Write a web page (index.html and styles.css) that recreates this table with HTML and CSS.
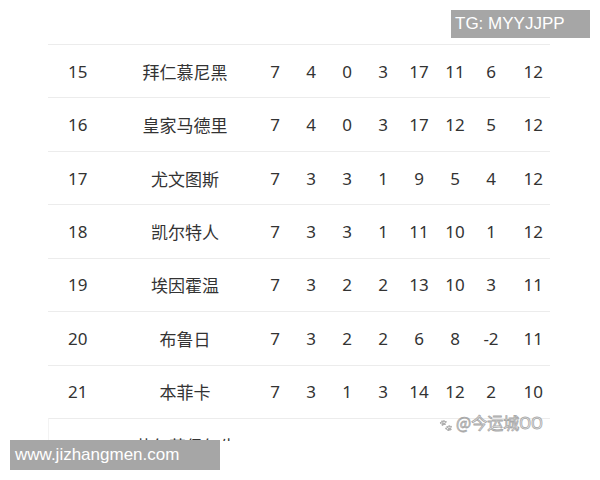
FILE: index.html
```html
<!DOCTYPE html>
<html lang="zh">
<head>
<meta charset="utf-8">
<link rel="stylesheet" href="styles.css">
</head>
<body>
<div class="page">
  <div class="table">
    <div class="row"><span class="rank">15</span><span class="name">拜仁慕尼黑</span><span>7</span><span>4</span><span>0</span><span>3</span><span>17</span><span>11</span><span>6</span><span class="pts">12</span></div>
    <div class="row"><span class="rank">16</span><span class="name">皇家马德里</span><span>7</span><span>4</span><span>0</span><span>3</span><span>17</span><span>12</span><span>5</span><span class="pts">12</span></div>
    <div class="row"><span class="rank">17</span><span class="name">尤文图斯</span><span>7</span><span>3</span><span>3</span><span>1</span><span>9</span><span>5</span><span>4</span><span class="pts">12</span></div>
    <div class="row"><span class="rank">18</span><span class="name">凯尔特人</span><span>7</span><span>3</span><span>3</span><span>1</span><span>11</span><span>10</span><span>1</span><span class="pts">12</span></div>
    <div class="row"><span class="rank">19</span><span class="name">埃因霍温</span><span>7</span><span>3</span><span>2</span><span>2</span><span>13</span><span>10</span><span>3</span><span class="pts">11</span></div>
    <div class="row"><span class="rank">20</span><span class="name">布鲁日</span><span>7</span><span>3</span><span>2</span><span>2</span><span>6</span><span>8</span><span>-2</span><span class="pts">11</span></div>
    <div class="row"><span class="rank">21</span><span class="name">本菲卡</span><span>7</span><span>3</span><span>1</span><span>3</span><span>14</span><span>12</span><span>2</span><span class="pts">10</span></div>
    <div class="row cut"><span class="rank"></span><span class="name">萨尔茨堡红牛</span></div>
  </div>
  <div class="watermark"><span class="paw">🐾</span>@今运城OO</div>
  <div class="badge tg">TG: MYYJJPP</div>
  <div class="badge url">www.jizhangmen.com</div>
</div>
</body>
</html>
```
FILE: styles.css
```css
html, body {
  margin: 0;
  padding: 0;
  background: #ffffff;
}
.page {
  position: relative;
  width: 600px;
  height: 480px;
  overflow: hidden;
  font-family: "Noto Sans", "Noto Sans CJK SC", sans-serif;
  color: #333333;
}
.table {
  display: flex;
  flex-direction: column;
  margin-left: 48px;
  margin-top: 44px;
  width: 502px;
  height: 397px;
  overflow: hidden;
}
.row {
  display: grid;
  grid-template-columns: 65px 144px repeat(7, 36px) 41px;
  flex: none;
  height: 52.43px;
  border-top: 1px solid #ececec;
  align-items: center;
  font-size: 17px;
  text-align: center;
}
.row.cut {
  border-left: 1px solid #f3f3f3;
}
.row .rank {
  text-align: left;
  padding-left: 20px;
}
.row .name {
  font-family: "Noto Sans CJK SC", sans-serif;
  font-size: 17px;
}
.row .pts {
  text-align: right;
  padding-right: 7px;
}
.watermark {
  position: absolute;
  left: 439px;
  top: 410px;
  font-family: "Noto Sans CJK SC", sans-serif;
  font-size: 16px;
  color: #f6f6f6;
  -webkit-text-stroke: 0.8px #a8a8a8;
}
.watermark .paw {
  font-size: 11px;
  margin-right: 3px;
  filter: grayscale(1) opacity(0.5);
}
.badge {
  position: absolute;
  background: #a6a6a6;
  color: #ffffff;
  font-family: "Liberation Sans", Arial, sans-serif;
  font-size: 17px;
  line-height: 28px;
  box-sizing: border-box;
}
.tg {
  left: 451px;
  top: 10px;
  width: 139px;
  height: 28px;
  padding-left: 4px;
}
.url {
  left: 10px;
  top: 440px;
  width: 210px;
  height: 30px;
  line-height: 30px;
  padding-left: 5px;
}
```
